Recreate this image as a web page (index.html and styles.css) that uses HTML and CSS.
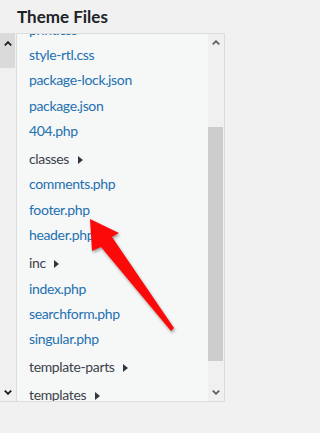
FILE: index.html
```html
<!DOCTYPE html>
<html lang="en">
<head>
<meta charset="utf-8">
<title>Theme Files</title>
<link rel="stylesheet" href="styles.css">
</head>
<body>
<h2 class="title">Theme Files</h2>
<div class="editor">
  <div class="side-scroll">
    <div class="side-thumb">
      <svg class="chev dark" viewBox="0 0 8 5" width="8" height="5"><polyline points="0.8,4.4 4,1.2 7.2,4.4"/></svg>
    </div>
    <div class="side-down">
      <svg class="chev dark" viewBox="0 0 8 5" width="8" height="5"><polyline points="0.8,0.6 4,3.8 7.2,0.6"/></svg>
    </div>
  </div>
  <div class="panel">
    <div class="files">
      <ul class="tree">
        <li class="file">print.css</li>
        <li class="file">style-rtl.css</li>
        <li class="file">package-lock.json</li>
        <li class="file">package.json</li>
        <li class="file">404.php</li>
        <li class="folder">classes<span class="caret"></span></li>
        <li class="file">comments.php</li>
        <li class="file">footer.php</li>
        <li class="file">header.php</li>
        <li class="folder">inc<span class="caret"></span></li>
        <li class="file">index.php</li>
        <li class="file">searchform.php</li>
        <li class="file">singular.php</li>
        <li class="folder">template-parts<span class="caret"></span></li>
        <li class="folder">templates<span class="caret"></span></li>
      </ul>
    </div>
    <div class="vscroll">
      <div class="sb-btn">
        <svg class="chev" viewBox="0 0 8 5" width="8" height="5"><polyline points="0.8,4.4 4,1.2 7.2,4.4"/></svg>
      </div>
      <div class="sb-track"><div class="sb-thumb"></div></div>
      <div class="sb-btn">
        <svg class="chev" viewBox="0 0 8 5" width="8" height="5"><polyline points="0.8,0.6 4,3.8 7.2,0.6"/></svg>
      </div>
    </div>
  </div>
</div>
<svg class="annotation" viewBox="0 0 235 433" width="235" height="433">
  <polygon class="red-arrow" points="90,219 119,233 112,237 174,328 171,331 101,247 92,251"/>
</svg>
</body>
</html>
```

FILE: styles.css
```css
html {
  background: #f1f1f1;
}

body {
  margin: 0;
  height: 433px;
  overflow: hidden;
  position: relative;
  background: #f1f1f1;
  font-family: Lato, "Open Sans", sans-serif;
}

.title {
  margin: 0;
  height: 33px;
  box-sizing: border-box;
  padding: 7px 0 0 17px;
  font-size: 17px;
  line-height: 20px;
  font-weight: 700;
  color: #1d2327;
}

.editor {
  display: flex;
  height: 369px;
}

.side-scroll {
  width: 16px;
  flex: none;
  box-sizing: border-box;
  display: flex;
  flex-direction: column;
  justify-content: space-between;
  background: #f0f0f0;
  border-bottom: 1px solid #dcdcdc;
}

.side-thumb {
  width: 15px;
  height: 35px;
  box-sizing: border-box;
  padding-top: 8px;
  display: flex;
  justify-content: center;
  align-items: flex-start;
  background: #dadada;
}

.side-down {
  width: 15px;
  height: 17px;
  display: flex;
  justify-content: center;
  align-items: center;
}

.chev {
  display: block;
  fill: none;
  stroke: #606060;
  stroke-width: 1.8;
}

.chev.dark {
  stroke: #1a1a1a;
}

.panel {
  width: 209px;
  flex: none;
  box-sizing: border-box;
  border: 1px solid #dcdcdc;
  display: flex;
  background: #f6f7f7;
}

.files {
  flex: 1;
  overflow: hidden;
}

.tree {
  list-style: none;
  margin: -17.5px 0 0;
  padding: 0;
}

.tree li {
  padding-left: 12px;
  font-size: 14px;
  line-height: 25.4px;
  letter-spacing: -0.35px;
  white-space: nowrap;
}

.file {
  color: #2271b1;
}

.folder {
  color: #3c434a;
  padding-top: 2.5px;
}

.caret {
  display: inline-block;
  width: 0;
  height: 0;
  margin-left: 8.5px;
  border-left: 5px solid #32373c;
  border-top: 4px solid transparent;
  border-bottom: 4px solid transparent;
  vertical-align: 0.5px;
}

.vscroll {
  width: 16px;
  flex: none;
  display: flex;
  flex-direction: column;
  background: #f0f0f0;
}

.sb-btn {
  height: 17px;
  display: flex;
  justify-content: center;
  align-items: center;
}

.sb-track {
  flex: 1;
}

.sb-thumb {
  margin-top: 76px;
  margin-right: 1px;
  height: 234px;
  background: #cdcdcd;
}

.annotation {
  position: absolute;
  left: 0;
  top: 0;
  pointer-events: none;
}

.red-arrow {
  fill: #fc0a0a;
  filter: drop-shadow(1px 2px 1.5px rgba(0, 0, 0, 0.35));
}
```
